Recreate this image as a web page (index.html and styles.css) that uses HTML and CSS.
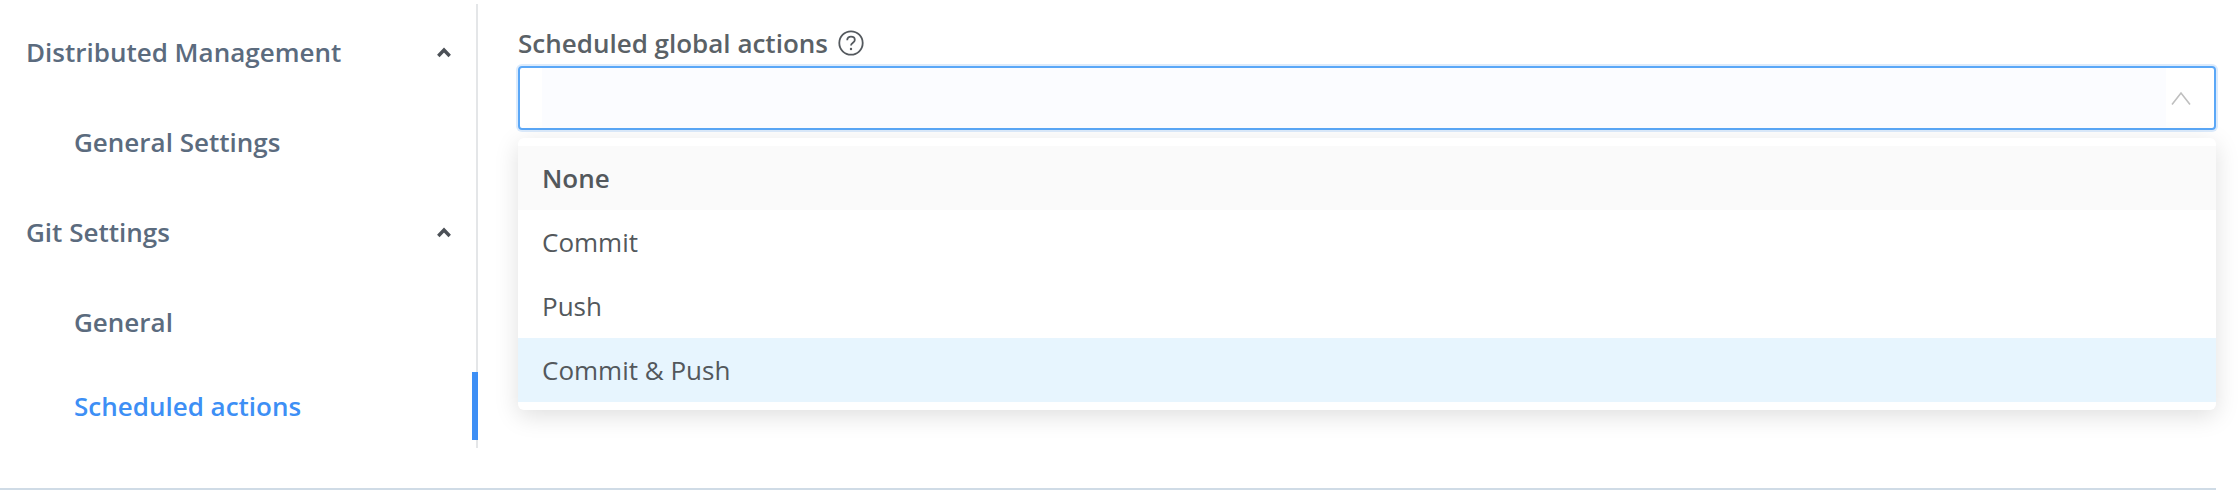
FILE: index.html
```html
<!DOCTYPE html>
<html lang="en">
<head>
<meta charset="utf-8">
<title>Scheduled actions</title>
<link rel="stylesheet" href="styles.css">
</head>
<body>
<div class="page">
  <nav class="sidebar">
    <div class="row group"><span>Distributed Management</span>
      <svg class="chev" viewBox="0 0 14 11" width="14" height="11"><path d="M1.3 9 7 3l5.7 6" fill="none" stroke="#4c5157" stroke-width="3.4"/></svg>
    </div>
    <div class="row item">General Settings</div>
    <div class="row group"><span>Git Settings</span>
      <svg class="chev" viewBox="0 0 14 11" width="14" height="11"><path d="M1.3 9 7 3l5.7 6" fill="none" stroke="#4c5157" stroke-width="3.4"/></svg>
    </div>
    <div class="row item tight">General</div>
    <div class="row item active">Scheduled actions</div>
  </nav>
  <main class="content">
    <div class="label">Scheduled global actions
      <svg class="help" viewBox="0 0 26 26" width="26" height="26"><circle cx="13" cy="13" r="11.7" fill="none" stroke="#54595e" stroke-width="1.8"/><path d="M9.2 10.2c0-2.3 1.7-3.6 3.8-3.6s3.8 1.3 3.8 3.3c0 2.8-3.8 2.8-3.8 5.6" fill="none" stroke="#54595e" stroke-width="1.8"/><circle cx="13" cy="19" r="1.2" fill="#54595e"/></svg>
    </div>
    <div class="select">
      <div class="input"></div>
      <svg class="caret" viewBox="0 0 20 16" width="20" height="16"><path d="M1 14.5 10 3l9 11.5" fill="none" stroke="#bfbfbf" stroke-width="1.6"/></svg>
    </div>
    <ul class="menu">
      <li class="selected">None</li>
      <li>Commit</li>
      <li>Push</li>
      <li class="hover">Commit &amp; Push</li>
    </ul>
  </main>
</div>
<div class="rule"></div>
</body>
</html>
```
FILE: styles.css
```css
* { box-sizing: border-box; }
html, body { margin: 0; padding: 0; background: #fff; }
body { width: 2238px; height: 494px; overflow: hidden; font-family: "Open Sans", "Liberation Sans", sans-serif; }
.page { display: flex; height: 488px; padding-top: 4px; align-items: flex-start; }
.sidebar { width: 478px; height: 444px; padding-top: 14px; border-right: 2px solid #e4e6e8; flex: none; }
.row { height: 68px; display: flex; align-items: center; font-size: 26px; font-weight: 600; color: #5b6b7e; margin-bottom: 22px; }
.group { justify-content: space-between; padding: 0 25px 0 26px; }
.item { padding-left: 74px; }
.tight { margin-bottom: 16px; }
.active { color: #3d8ff5; margin-right: -2px; border-right: 6px solid #3d8ff5; margin-bottom: 0; }
.chev { flex: none; }
.content { flex: none; width: 1698px; margin-left: 40px; padding-top: 20px; }
.label { height: 38px; margin-bottom: 4px; display: flex; align-items: center; gap: 10px; font-size: 26px; font-weight: 600; color: #5a6166; }
.help { flex: none; }
.select { height: 64px; border: 2px solid #5aa7f7; border-radius: 4px; box-shadow: 0 0 0 2px #dcebfc; display: flex; align-items: center; justify-content: space-between; padding-left: 22px; }
.input { width: 1624px; height: 100%; background: #fbfcff; }
.caret { flex: none; margin-right: 23px; }
.menu { list-style: none; margin: 8px 0 0; padding: 8px 0; background: #fff; border-radius: 6px; box-shadow: 0 6px 24px rgba(0,0,0,.13); }
.menu li { height: 64px; display: flex; align-items: center; padding-left: 24px; font-size: 26px; color: #53585c; }
.menu .selected { background: #fafafa; font-weight: 600; }
.menu .hover { background: #e7f5fe; }
.rule { width: 2216px; height: 2px; background: #cfdbe6; }
```
